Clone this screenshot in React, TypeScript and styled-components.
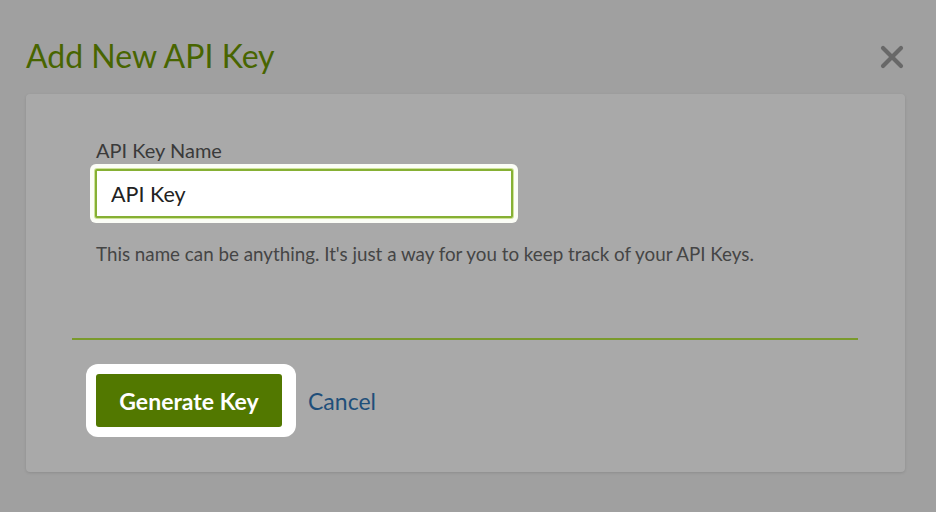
import React from "react";
import styled, { createGlobalStyle } from "styled-components";

const Global = createGlobalStyle`
  html, body { margin: 0; padding: 0; }
  body {
    background: #a0a0a0;
    font-family: Lato, "Open Sans", "Liberation Sans", sans-serif;
  }
`;

const Page = styled.div`
  width: 936px;
  height: 512px;
  box-sizing: border-box;
  padding: 36px 30px 0 26px;
  background: #a0a0a0;
`;

const Header = styled.div`
  display: flex;
  align-items: center;
  justify-content: space-between;
  height: 40px;
`;

const Title = styled.h2`
  margin: 0;
  font-size: 32px;
  font-weight: 400;
  color: #486500;
  line-height: 38px;
`;

const Close = styled.button`
  border: 0;
  background: none;
  padding: 0;
  margin-top: 2px;
  width: 28px;
  height: 28px;
  display: flex;
  align-items: center;
  justify-content: center;
  cursor: pointer;
`;

const Card = styled.div`
  margin-top: 18px;
  width: 879px;
  height: 378px;
  box-sizing: border-box;
  background: #a9a9a9;
  border-radius: 4px;
  box-shadow: 0 1px 3px rgba(0, 0, 0, 0.12);
  padding: 44px 47px 0 46px;
`;

const Form = styled.div`
  padding-left: 24px;
`;

const Label = styled.label`
  display: block;
  font-size: 20px;
  color: #3a3a3a;
  line-height: 24px;
  margin-bottom: 7px;
`;

const Input = styled.input`
  display: block;
  width: 418px;
  height: 49px;
  box-sizing: border-box;
  margin-left: -1px;
  border: 2px solid #86b034;
  border-radius: 2px;
  background: #fff;
  box-shadow: 0 0 0 1px #cfe39a, 0 0 0 5px #fbfdf6;
  padding: 0 14px;
  font-family: inherit;
  font-size: 21.5px;
  color: #222;
  outline: none;
`;

const Help = styled.p`
  margin: 24px 0 0;
  font-size: 18.8px;
  color: #454545;
  line-height: 24px;
`;

const Divider = styled.hr`
  margin: 72px 0 0;
  border: 0;
  height: 2px;
  background: #7a9a2c;
`;

const Actions = styled.div`
  display: flex;
  align-items: center;
  gap: 12px;
  margin-top: 24px;
  padding-left: 14px;
`;

const FocusRing = styled.div`
  display: flex;
  padding: 10px 14px 10px 10px;
  background: #fff;
  border-radius: 12px;
`;

const Primary = styled.button`
  width: 186px;
  height: 53px;
  border: 0;
  border-radius: 3px;
  background: #527800;
  color: #fff;
  font-family: inherit;
  font-weight: 700;
  font-size: 23px;
  cursor: pointer;
`;

const Link = styled.a`
  font-size: 23px;
  color: #1f4f7a;
  text-decoration: none;
  cursor: pointer;
`;

export default function App() {
  return (
    <>
      <Global />
      <Page>
        <Header>
          <Title>Add New API Key</Title>
          <Close aria-label="Close">
            <svg width="24" height="24" viewBox="0 0 24 24">
              <path d="M3 3 L21 21 M21 3 L3 21" stroke="#686868" strokeWidth="4.2" strokeLinecap="round" />
            </svg>
          </Close>
        </Header>
        <Card>
          <Form>
            <Label htmlFor="k">API Key Name</Label>
            <Input id="k" defaultValue="API Key" />
            <Help>This name can be anything. It's just a way for you to keep track of your API Keys.</Help>
          </Form>
          <Divider />
          <Actions>
            <FocusRing>
              <Primary>Generate Key</Primary>
            </FocusRing>
            <Link>Cancel</Link>
          </Actions>
        </Card>
      </Page>
    </>
  );
}
